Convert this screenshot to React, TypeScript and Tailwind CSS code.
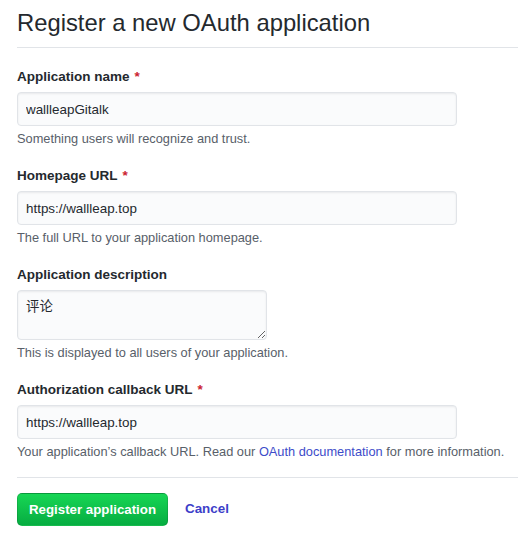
import React from "react";

const font = { fontFamily: '"Liberation Sans", "Noto Sans CJK SC", Arial, sans-serif' };

function Label({ text, required }: { text: string; required?: boolean }) {
  return (
    <label className="block text-[13.5px] leading-[20px] font-bold text-[#24292e] mt-[1px] mb-[5px]">
      {text}
      {required && <span className="text-[#cb2431] ml-[5px]">*</span>}
    </label>
  );
}

function Help({ children }: { children: React.ReactNode }) {
  return <p className="mt-[4px] text-[12.8px] leading-[18px] text-[#586069]">{children}</p>;
}

function TextInput({ value }: { value: string }) {
  return (
    <input
      readOnly
      value={value}
      style={font}
      className="block w-[440px] h-[34px] px-[8px] text-[13.4px] text-[#24292e] bg-[#fafbfc] border border-[#e1e4e8] rounded-[4px] outline-none shadow-[inset_0_1px_2px_rgba(27,31,35,0.075)]"
    />
  );
}

export default function App() {
  return (
    <div style={font} className="w-[518px] h-[544px] bg-white pl-[17px] pt-[8px] text-[#24292e] overflow-hidden">
      <h1 className="text-[23.8px] leading-[30px] font-normal text-[#24292e] pb-[9px] border-b border-[#e1e4e8]">
        Register a new OAuth application
      </h1>
      <div className="pt-[18px] flex flex-col gap-[17px]">
        <div>
          <Label text="Application name" required />
          <TextInput value="wallleapGitalk" />
          <Help>Something users will recognize and trust.</Help>
        </div>
        <div>
          <Label text="Homepage URL" required />
          <TextInput value="https://wallleap.top" />
          <Help>The full URL to your application homepage.</Help>
        </div>
        <div>
          <Label text="Application description" />
          <textarea
            readOnly
            value="评论"
            style={font}
            className="block w-[250px] h-[50px] px-[8px] py-[6px] text-[13.4px] leading-[20px] text-[#24292e] bg-[#fafbfc] border border-[#e1e4e8] rounded-[4px] outline-none resize-y shadow-[inset_0_1px_2px_rgba(27,31,35,0.075)]"
          />
          <Help>This is displayed to all users of your application.</Help>
        </div>
        <div>
          <Label text="Authorization callback URL" required />
          <TextInput value="https://wallleap.top" />
          <Help>
            Your application’s callback URL. Read our{" "}
            <a className="text-[#3d4cc9]">OAuth documentation</a> for more information.
          </Help>
        </div>
      </div>
      <div className="mt-[16px] border-t border-[#e1e4e8] pt-[15px] flex items-center">
        <button
          style={font}
          className="h-[33px] w-[151px] rounded-[5px] text-white text-[13.3px] font-bold bg-gradient-to-b from-[#17d655] to-[#06ad41] border border-[rgba(27,31,35,0.15)]"
        >
          Register application
        </button>
        <a className="ml-[17px] text-[13.4px] font-bold text-[#3d3fc9]">Cancel</a>
      </div>
    </div>
  );
}
